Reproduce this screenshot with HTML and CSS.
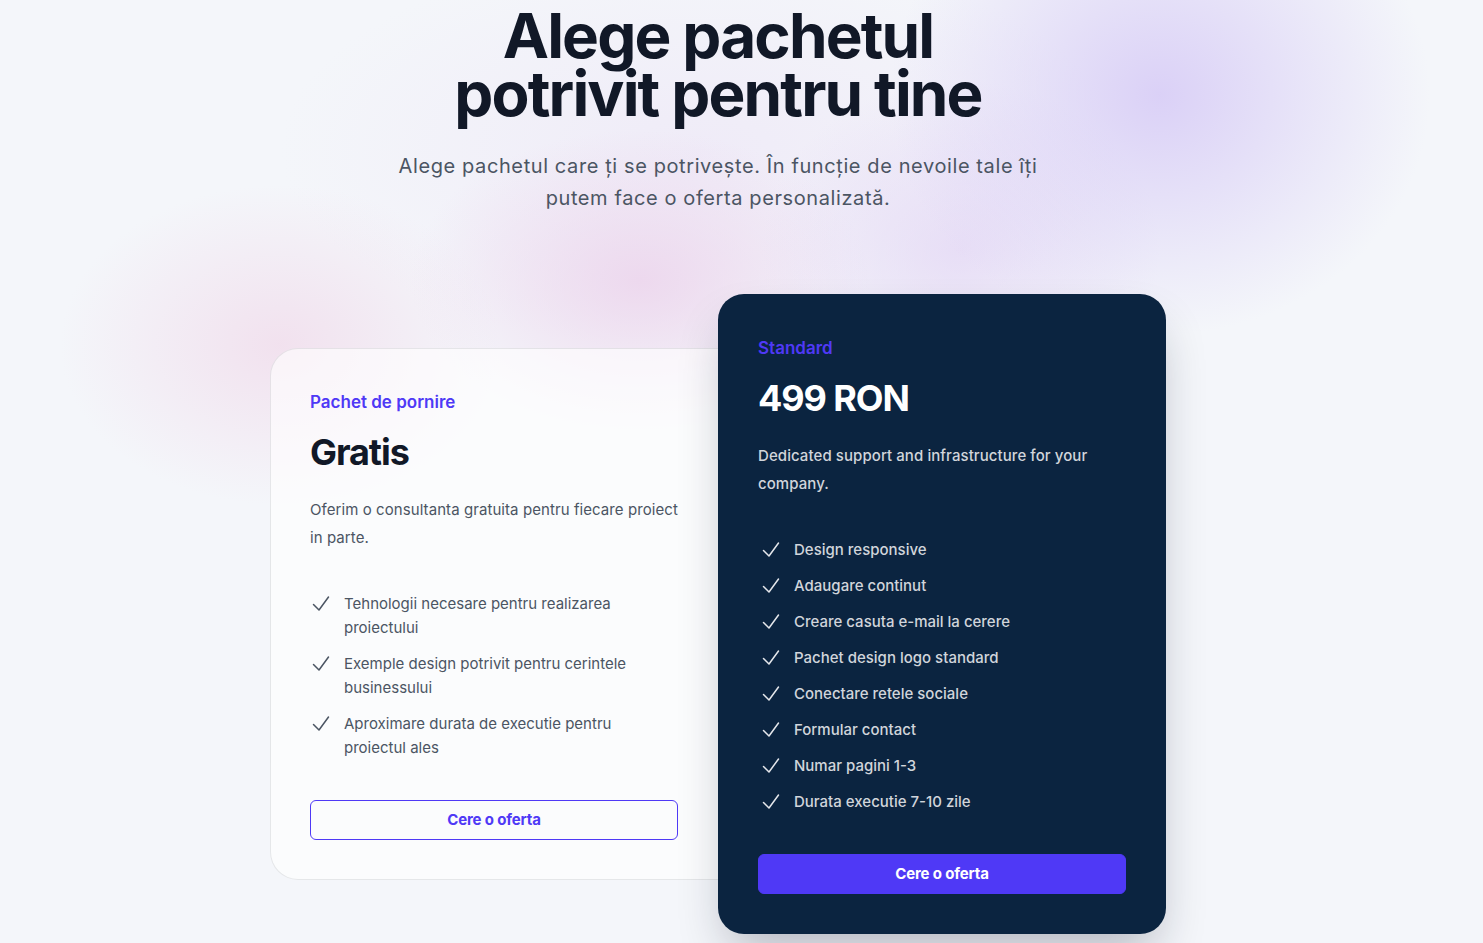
FILE: index.html
```html
<!DOCTYPE html>
<html lang="ro">
<head>
<meta charset="utf-8">
<title>Prețuri</title>
<link rel="stylesheet" href="styles.css">
</head>
<body>
<div class="page">
  <div class="wrap">
    <header class="hero">
      <h1 class="title"><span class="title-line">Alege pachetul</span><span class="title-line">potrivit pentru tine</span></h1>
      <p class="lead">Alege pachetul care ți se potrivește. În funcție de nevoile tale îți putem face o oferta personalizată.</p>
    </header>

    <div class="tiers">
      <section class="tier tier-light">
        <h3 class="tier-name">Pachet de pornire</h3>
        <p class="price">Gratis</p>
        <p class="desc">Oferim o consultanta gratuita pentru fiecare proiect in parte.</p>
        <ul class="features">
          <li><svg class="check" viewBox="0 0 20 24" fill="none"><path d="M3.5 12.5l5.5 5.5 9.5-13"/></svg><span>Tehnologii necesare pentru realizarea proiectului</span></li>
          <li><svg class="check" viewBox="0 0 20 24" fill="none"><path d="M3.5 12.5l5.5 5.5 9.5-13"/></svg><span>Exemple design potrivit pentru cerintele businessului</span></li>
          <li><svg class="check" viewBox="0 0 20 24" fill="none"><path d="M3.5 12.5l5.5 5.5 9.5-13"/></svg><span>Aproximare durata de executie pentru proiectul ales</span></li>
        </ul>
        <a class="btn btn-outline" href="#">Cere o oferta</a>
      </section>

      <section class="tier tier-dark">
        <h3 class="tier-name">Standard</h3>
        <p class="price">499 RON</p>
        <p class="desc">Dedicated support and infrastructure for your company.</p>
        <ul class="features">
          <li><svg class="check" viewBox="0 0 20 24" fill="none"><path d="M3.5 12.5l5.5 5.5 9.5-13"/></svg><span>Design responsive</span></li>
          <li><svg class="check" viewBox="0 0 20 24" fill="none"><path d="M3.5 12.5l5.5 5.5 9.5-13"/></svg><span>Adaugare continut</span></li>
          <li><svg class="check" viewBox="0 0 20 24" fill="none"><path d="M3.5 12.5l5.5 5.5 9.5-13"/></svg><span>Creare casuta e-mail la cerere</span></li>
          <li><svg class="check" viewBox="0 0 20 24" fill="none"><path d="M3.5 12.5l5.5 5.5 9.5-13"/></svg><span>Pachet design logo standard</span></li>
          <li><svg class="check" viewBox="0 0 20 24" fill="none"><path d="M3.5 12.5l5.5 5.5 9.5-13"/></svg><span>Conectare retele sociale</span></li>
          <li><svg class="check" viewBox="0 0 20 24" fill="none"><path d="M3.5 12.5l5.5 5.5 9.5-13"/></svg><span>Formular contact</span></li>
          <li><svg class="check" viewBox="0 0 20 24" fill="none"><path d="M3.5 12.5l5.5 5.5 9.5-13"/></svg><span>Numar pagini 1-3</span></li>
          <li><svg class="check" viewBox="0 0 20 24" fill="none"><path d="M3.5 12.5l5.5 5.5 9.5-13"/></svg><span>Durata executie 7-10 zile</span></li>
        </ul>
        <a class="btn btn-solid" href="#">Cere o oferta</a>
      </section>
    </div>
  </div>
</div>
</body>
</html>
```
FILE: styles.css
```css
* { box-sizing: border-box; }

html, body {
  margin: 0;
  padding: 0;
}

body {
  font-family: Inter, "Noto Sans", "Liberation Sans", sans-serif;
  color: #111827;
  background: #f4f6fa;
}

.page {
  min-height: 943px;
  overflow: hidden;
  background:
    radial-gradient(ellipse 270px 240px at 1160px 95px, rgba(214, 202, 246, 0.85), rgba(214, 202, 246, 0) 100%),
    radial-gradient(ellipse 200px 170px at 960px 250px, rgba(225, 210, 244, 0.65), rgba(225, 210, 244, 0) 100%),
    radial-gradient(ellipse 230px 150px at 640px 280px, rgba(236, 212, 236, 0.85), rgba(236, 212, 236, 0) 100%),
    radial-gradient(ellipse 220px 160px at 280px 345px, rgba(240, 214, 232, 0.65), rgba(240, 214, 232, 0) 100%),
    radial-gradient(ellipse 420px 200px at 700px 150px, rgba(236, 228, 246, 0.6), rgba(236, 228, 246, 0) 100%),
    #f4f6fa;
}

.wrap {
  padding: 0 47px 0 0;
}

.hero {
  text-align: center;
}

.title {
  margin: 0;
  padding-top: 7px;
  font-size: 62px;
  line-height: 58px;
  font-weight: 700;
  letter-spacing: -0.03em;
  color: #111827;
}

.title-line {
  display: block;
  line-height: 58px;
}

.lead {
  margin: 27px auto 0;
  max-width: 660px;
  font-size: 20px;
  line-height: 32px;
  letter-spacing: 0.03em;
  color: #4b5563;
}

.tiers {
  margin: 80px auto 0;
  width: 896px;
  display: grid;
  grid-template-columns: 448px 448px;
  align-items: center;
}

.tier {
  padding: 40px;
}

.tier-light {
  background: rgba(255, 255, 255, 0.62);
  border: 1px solid rgba(17, 24, 39, 0.09);
  border-right: 0;
  border-radius: 28px 0 0 28px;
  padding: 39px 40px 39px 39px;
}

.tier-dark {
  position: relative;
  background: #0b2440;
  border-radius: 26px;
  box-shadow: 0 25px 50px -12px rgba(15, 23, 42, 0.3);
}

.tier-name {
  margin: 0;
  font-size: 17px;
  line-height: 28px;
  font-weight: 600;
  color: #4f39f6;
}

.price {
  margin: 16px 0 0;
  font-size: 36px;
  line-height: 40px;
  font-weight: 700;
  letter-spacing: -0.03em;
  color: #111827;
}

.tier-dark .price { color: #ffffff; }

.desc {
  margin: 24px 0 0;
  font-size: 15px;
  line-height: 28px;
  letter-spacing: 0.005em;
  color: #4b5563;
}

.tier-dark .desc { color: #d1d5db; font-weight: 500; }

.features {
  list-style: none;
  margin: 40px 0 0;
  padding: 0;
  display: flex;
  flex-direction: column;
  gap: 12px;
  font-size: 15px;
  line-height: 24px;
  color: #4b5563;
}

.tier-light .features { padding-right: 40px; }

.tier-dark .features { color: #d1d5db; font-weight: 500; }

.features li {
  display: flex;
  gap: 14px;
  align-items: flex-start;
}

.check {
  flex: none;
  width: 20px;
  height: 24px;
  stroke: #4b5563;
  stroke-width: 1.5;
  stroke-linecap: round;
  stroke-linejoin: round;
}

.tier-dark .check { stroke: #e5e7eb; margin-left: 2px; }

.btn {
  display: block;
  margin-top: 40px;
  height: 40px;
  line-height: 38px;
  border-radius: 6px;
  text-align: center;
  text-decoration: none;
  font-size: 15px;
  font-weight: 700;
  letter-spacing: -0.01em;
}

.btn-outline {
  border: 1px solid #4f39f6;
  color: #4f39f6;
  background: transparent;
}

.btn-solid {
  border: 1px solid #4f39f6;
  background: #4f39f6;
  color: #ffffff;
}
```
